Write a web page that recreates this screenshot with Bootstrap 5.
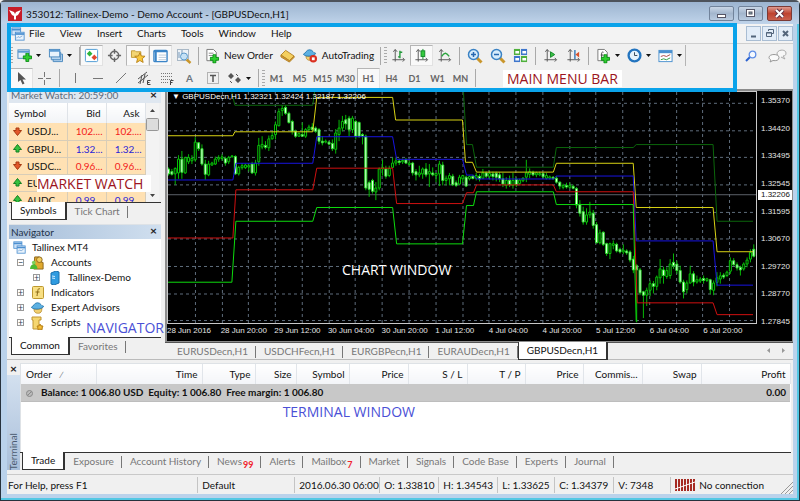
<!DOCTYPE html>
<html lang="en">
<head>
<meta charset="utf-8">
<meta name="viewport" content="width=device-width, initial-scale=1">
<title>353012: Tallinex-Demo - Demo Account</title>
<link href="https://cdn.jsdelivr.net/npm/bootstrap@5.3.0/dist/css/bootstrap.min.css" rel="stylesheet">
<style>
  body { font-family: Lato, "Open Sans", sans-serif; font-size: 10px; line-height: 15px; color: #111; background: #f0f0f0; }
  button { background: none; border: 1px solid transparent; padding: 0; color: inherit; font: inherit; }
  a { color: inherit; text-decoration: none; }
  svg { display: block; flex: none; }
  .app-window { min-height: 100vh; border: 1px solid #27323d; border-top: 2px solid #4c525b; background: #bad2eb; padding: 0 6px 6px; box-shadow: inset -1px -1px 0 1px #53c8e4; border-radius: 5px 5px 0 0; }
  .title-bar { height: 22px; margin: 0 -6px; padding: 1px 7px 0; background: linear-gradient(#9cb4d0, #c0d4ea); line-height: 20px; }
  .win-btn { width: 25px; height: 15px; border: 1px solid #71839b; border-radius: 2px; background: linear-gradient(#c9d6e6, #a3b6cd 50%, #b9cbe0); }
  .win-btn.shut { background: linear-gradient(#dd9a8f, #bf4330 50%, #c9604e); border-color: #7c3a35; }
  .face { background: #f0f0f0; }
  .menu-row { height: 20px; background: #f3f3f3; border-bottom: 1px solid #cfcfcf; }
  .menu-items { gap: 15px; margin-left: 4px; }
  .mdi-btn { width: 15px; height: 15px; border: 1px solid #a9bdd3; background: #e3edf8; margin-left: 1px; }
  .tool-row { height: 23px; padding-left: 3px; }
  .tool-row + .tool-row { height: 22px; }
  .tool { width: 23px; height: 21px; flex: none; display: flex; align-items: center; justify-content: center; }
  .tool.wide { width: 31px; gap: 4px; }
  .tool.label-tool { width: auto; gap: 4px; padding: 0 2px; }
  .tool.on { background: #f9f9f9; border-color: #b5b5b5 #e2e2e2 #e2e2e2 #b5b5b5; }
  .tool.period { font-size: 9px; font-weight: 700; color: #666; }
  .rule { width: 1px; height: 18px; background: #a9a9a9; margin: 0 3px; flex: none; }
  .grip { width: 3px; height: 17px; flex: none; background: repeating-linear-gradient(#aaa 0 1px, #f0f0f0 1px 3px); }
  .bar-end { border-right: 1px solid #b4b4b4; }
  .band { border: 4px solid #0aa3ea; left: 0; right: 56px; top: -1px; bottom: -3px; pointer-events: none; z-index: 5; }
  .note { font: 14px/17px "Open Sans", "Noto Sans", sans-serif; white-space: nowrap; }
  .note.red { color: #9c1420; background: #fff; }
  .note.blue { color: #4a50d6; }
  .watch-note { left: 28px; top: 86px; }
  .nav-note { left: 77px; top: 80px; }
  .chart-note { left: 28%; top: 68%; }
  .terminal-note { margin: 1px 0 0 34%; }
  .side { width: 158px; flex: none; padding: 0 4px 4px 2px; }
  .pane-head { height: 14px; line-height: 14px; color: #23344a; padding: 0 3px 0 2px; background: linear-gradient(90deg, #a6bed9, #d0dfef); }
  .pane-head.pale { background: #dfe7f0; color: #5c6a7a; line-height: 12px; }
  .shut-x { width: 9px; height: 12px; line-height: 10px; font-weight: 700; font-size: 12px; color: #222; }
  .quote-box { height: 99px; }
  .quotes { table-layout: fixed; width: 136px; line-height: 16px; }
  .quotes th { font-weight: 400; height: 20px; background: linear-gradient(#fff, #f2f4f7); border-right: 1px solid #dfe3e8; padding: 0 5px; }
  .quotes td { height: 17px; background: #ffe1b3; border-right: 1px solid #d8cdb8; border-bottom: 1px solid #d8cdb8; padding: 0 3px; white-space: nowrap; }
  .quotes td svg { display: inline-block; margin: -2px 5px 0 1px; }
  .down { color: #f3211c; } .rise { color: #2a25d8; }
  .strip { height: 18px; border-top: 1px solid #333; line-height: 17px; color: #777; }
  .strip button { height: 17px; border: 0; white-space: nowrap; padding: 0 8px; position: relative; }
  .strip button:not(.current):after { content: ""; position: absolute; right: 0; top: 3px; height: 12px; width: 1px; background: #777; }
  .strip .current { background: #fff; color: #111; border: solid #333; border-width: 0 2px 1px 1px; margin: -1px 0 0 2px; height: 18px; }
  .tree { line-height: 15px; padding-top: 1px; }
  .tree ul, ul.tree { list-style: none; padding-left: 0; margin: 0; }
  .tree .node { display: flex; align-items: center; gap: 6px; height: 15px; }
  .twig { width: 7px; height: 7px; border: 1px solid #999; background: #fff; color: #345; font-size: 9px; line-height: 5px; text-align: center; flex: none; }
  .chart-side { min-width: 0; }
  .chart { background: #000; color: #e4e4e4; font: 8px/10px "Liberation Sans", Arial, sans-serif; border: solid #8c8c8c; border-width: 2px 1px 1px 2px; }
  .plot { border: 1px solid #c8c8c8; min-height: 0; }
  .plot svg { position: absolute; inset: 0; width: 100%; height: 100%; }
  .times { display: grid; grid-template-columns: repeat(11, 1fr); height: 17px; padding-top: 2px; white-space: nowrap; }
  .prices { width: 35px; padding: 5px 0 14px 4px; }
  .now { background: #fff; color: #111; left: 1px; right: 0; top: 99px; padding-left: 3px; }
  .doc-tabs { border-top: 1px solid #555; height: 17px; }
  .doc-tabs .current { margin-left: 0; }
  .terminal { padding: 3px 0 4px; border-top: 1px solid #bbb; }
  .ledger { height: 89px; }
  .orders { table-layout: fixed; width: 100%; }
  .orders th { font-weight: 400; text-align: right; height: 20px; padding: 0 4px; white-space: nowrap; background: linear-gradient(#fff, #f3f5f8); border-right: 1px solid #e1e5ea; }
  .orders td { height: 17px; background: #c8c8c8; font-weight: 700; color: #111; white-space: pre; padding: 0 4px; border-bottom: 1px solid #bdbdbd; }
  .orders th:first-child, .orders td:first-child { text-align: left; padding-left: 5px; }
  .spine { width: 13px; background: linear-gradient(#f0f0f0 12px, #d3e0ef 12px, #a9bfda); }
  .spine span { writing-mode: vertical-rl; transform: rotate(180deg); color: #4b5b70; line-height: 13px; }
  .count { color: #f0232c; font-size: 9px; font-weight: 700; position: relative; top: 3px; margin-left: 1px; }
  .status { height: 20px; line-height: 18px; border-top: 1px solid #c9c9c9; white-space: nowrap; padding-left: 1px; }
  .status > span { border-left: 1px solid #c4c4c4; padding-left: 4px; height: 16px; line-height: 16px; flex: none; }
  .status .w-a { width: 97px; } .status .w-b { width: 85px; } .status .w-c { width: 59px; } .status .w-d { width: 57px; }
</style>
</head>
<body>
<svg width="0" height="0" class="position-absolute" aria-hidden="true">
  <defs>
    <symbol id="i-caret" viewBox="0 0 5 3"><path d="M0 0h5L2.500 3z" fill="#111"/></symbol>
    <symbol id="i-windows" viewBox="0 0 16 16"><rect x="1" y="1" width="10" height="8" fill="#cfe3f7" stroke="#4b8fd0"/><path d="M1 3h10" stroke="#4b8fd0" stroke-width="2"/><rect x="5" y="6" width="10" height="9" fill="#e9f3fc" stroke="#4b8fd0"/><path d="M5 8h10" stroke="#4b8fd0" stroke-width="2"/><path d="M6 13l2-2 2 1 3-2" stroke="#7aa6d4" fill="none"/></symbol>
    <symbol id="i-plus" viewBox="0 0 10 10"><path d="M3.500.5h3v3h3v3h-3v3h-3v-3h-3v-3h3z" fill="#2fcf2f" stroke="#0a8c14"/></symbol>
    <symbol id="i-down" viewBox="0 0 9 9"><path d="M3 1h3v2.500h2.500L4.500 8.500.5 3.500H3z" fill="#e2572a" stroke="#a63a12"/></symbol>
    <symbol id="i-up" viewBox="0 0 9 9"><path d="M3 8h3V5.500h2.500L4.500.5.5 5.500H3z" fill="#35c13f" stroke="#138022"/></symbol>
    <symbol id="i-axes" viewBox="0 0 16 16"><path d="M4.500 2v12.500M1.500 12.500H14M2.500 4l2-2.500 2 2.500M12.500 10.500l2 2-2 2" stroke="#555" fill="none"/></symbol>
    <symbol id="i-lens" viewBox="0 0 16 16"><path d="M9.500 9.500l5 5" stroke="#c9962c" stroke-width="3"/><circle cx="6.500" cy="6.500" r="5" fill="#d6ecfb" stroke="#3a82c4" stroke-width="1.500"/></symbol>
    <symbol id="i-hat" viewBox="0 0 16 16"><path d="M4 9c0 4 2 5 5 5s4-2 4-6c-3 2-6 2-9 1z" fill="#f1d070" stroke="#bb9238"/><path d="M1 7c3-1 3-5 7-5s4 4 7 4c0 3-12 5-14 1z" fill="#5cb0e2" stroke="#2878ad"/></symbol>
  </defs>
</svg>

<div class="app-window d-flex flex-column">
  <header class="title-bar d-flex align-items-center">
    <svg width="14" height="14" viewBox="0 0 14 14"><rect width="14" height="14" fill="#c71c28"/><path d="M1 3l5 2 1 2 1-2 5-2-3 5-2 1v3l-1 1-1-1V9L4 8z" fill="#fff"/></svg>
    <span class="ms-1 text-nowrap">353012: Tallinex-Demo - Demo Account - [GBPUSDecn,H1]</span>
    <div class="d-flex ms-auto gap-1">
      <button class="win-btn" aria-label="Minimize"><svg width="23" height="13" viewBox="0 0 23 13"><rect x="7.500" y="7.500" width="8" height="3" fill="#fff" stroke="#556"/></svg></button>
      <button class="win-btn" aria-label="Maximize"><svg width="23" height="13" viewBox="0 0 23 13"><rect x="7.500" y="2.500" width="8" height="7" fill="#fff" stroke="#556"/><rect x="10" y="5" width="3" height="2" fill="#8aa" stroke="#556"/></svg></button>
      <button class="win-btn shut" aria-label="Close"><svg width="23" height="13" viewBox="0 0 23 13"><path d="M8 3l7 7M15 3l-7 7" stroke="#634" stroke-width="4"/><path d="M8 3l7 7M15 3l-7 7" stroke="#fff" stroke-width="2"/></svg></button>
    </div>
  </header>

  <div class="face position-relative">
    <div class="band position-absolute"></div>
    <nav class="menu-row d-flex align-items-center ps-1" aria-label="Main">
      <svg width="14" height="14"><use href="#i-windows"/></svg>
      <div class="menu-items d-flex">
        <a href="#">File</a>
        <a href="#">View</a>
        <a href="#">Insert</a>
        <a href="#">Charts</a>
        <a href="#">Tools</a>
        <a href="#">Window</a>
        <a href="#">Help</a>
      </div>
      <div class="d-flex ms-auto">
        <button class="mdi-btn" aria-label="Minimize chart"><svg width="13" height="13"><path d="M4 9.500h5" stroke="#53657b" stroke-width="2"/></svg></button>
        <button class="mdi-btn" aria-label="Restore chart"><svg width="13" height="13"><path d="M5.500 4V2.500h5v4H9M3.500 5.500h5v4h-5zM3.500 6h5" stroke="#53657b" fill="none"/></svg></button>
        <button class="mdi-btn" aria-label="Close chart"><svg width="13" height="13"><path d="M4 4l5 5M9 4l-5 5" stroke="#53657b" stroke-width="2"/></svg></button>
      </div>
    </nav>

    <div class="tool-row d-flex align-items-center">
      <div class="d-flex align-items-center bar-end">
        <div class="grip"></div>
        <button class="tool wide" aria-label="New chart"><svg width="15" height="15" viewBox="0 0 16 16"><rect x="1" y="2" width="12" height="9" fill="#e4f0fb" stroke="#4a88be"/><path d="M1 4h12" stroke="#5b9ad2" stroke-width="2"/><use href="#i-plus" x="6" y="5" width="10" height="10"/></svg><svg width="5" height="3"><use href="#i-caret"/></svg></button>
        <button class="tool wide" aria-label="Profiles"><svg width="15" height="15" viewBox="0 0 16 16"><path d="M5.500 12v2.500h10v-8H14M3.500 9.500v3h10v-8H12" fill="#b8d5ef" stroke="#4a88be"/><rect x="1.500" y="1.500" width="11" height="8" fill="#e9f3fc" stroke="#4a88be"/><path d="M1 3h12" stroke="#5b9ad2" stroke-width="2"/></svg><svg width="5" height="3"><use href="#i-caret"/></svg></button>
        <div class="rule mx-1 me-0"></div>
        <button class="tool on" aria-label="Market Watch"><svg width="15" height="15" viewBox="0 0 16 16"><rect x="1.500" y="1.500" width="13" height="13" rx="1" fill="#fff" stroke="#4b9ad4"/><path d="M3 6l3-3 3 3-3 3z" fill="#2cb53b"/><path d="M8 10l3-3 3 3-3 3z" fill="#e2482d"/></svg></button>
        <button class="tool" aria-label="Data Window"><svg width="15" height="15" viewBox="0 0 16 16"><circle cx="8" cy="8" r="4.500" fill="none" stroke="#666" stroke-width="1.500"/><path d="M8 1v5M8 10v5M1 8h5M10 8h5" stroke="#666" stroke-width="1.500"/></svg></button>
        <button class="tool on" aria-label="Navigator"><svg width="16" height="15" viewBox="0 0 16 16"><path d="M1 3h4l1 1h5v6H1z" fill="#f3d674" stroke="#c19a34"/><path d="M10 5l1.500 3.500 4 .3-3 2.600 1 4L10 13.300 6.500 15.500l1-4-3-2.700 4-.3z" fill="#f9c93d" stroke="#b98218"/></svg></button>
        <button class="tool on" aria-label="Terminal"><svg width="15" height="14" viewBox="0 0 16 14"><rect x="1" y="1" width="14" height="12" rx="1" fill="#fff" stroke="#3b85c8" stroke-width="1.500"/><path d="M1 2h14M3 2v11" stroke="#3b85c8" stroke-width="2"/><path d="M6 6h8M6 8.500h8M6 11h8" stroke="#b9c9d9"/></svg></button>
        <button class="tool" aria-label="Strategy Tester"><svg width="16" height="16" viewBox="0 0 16 16"><rect x="1.500" y="1.500" width="11" height="11" fill="#eef3f7" stroke="#a9b8c6"/><path d="M3 4v6M6 2v6" stroke="#7699bb"/><path d="M10.500 11.500l4 3.500" stroke="#c9962c" stroke-width="2.500"/><circle cx="8" cy="8.500" r="3.500" fill="#c5e2f6" stroke="#5e9bcb"/></svg></button>
        <div class="rule"></div>
        <button class="tool label-tool"><svg width="15" height="16" viewBox="0 0 16 16"><path d="M2 1h7l3 3v9H2z" fill="#fff" stroke="#777"/><path d="M4 5h5M4 7.500h5" stroke="#888"/><use href="#i-plus" x="5" y="6" width="10" height="10"/></svg>New Order</button>
        <button class="tool" aria-label="MetaEditor"><svg width="15" height="14" viewBox="0 0 16 14"><path d="M1 6l5-5 9 6-5 5z" fill="#f4cf5e" stroke="#b3832a"/><path d="M1 6v2l9 5.500 5-5V7l-5 5z" fill="#d9992c" stroke="#b3832a"/></svg></button>
        <button class="tool label-tool"><svg width="16" height="15" viewBox="0 0 16 16"><use href="#i-hat" width="15" height="15"/><circle cx="11.500" cy="11.500" r="4" fill="#da2f20"/><rect x="10" y="10" width="3" height="3" fill="#fff"/></svg>AutoTrading</button>
        <div class="rule"></div>
        <div class="grip"></div>
        <button class="tool" aria-label="Bar chart"><svg width="15" height="15" viewBox="0 0 16 16"><use href="#i-axes"/><path d="M9.500 3v8M7.500 9.500h2M9.500 4.500h2.500" stroke="#23993a" stroke-width="1.500"/></svg></button>
        <button class="tool on" aria-label="Candlesticks"><svg width="15" height="15" viewBox="0 0 16 16"><use href="#i-axes"/><path d="M9.500 1v11" stroke="#128a28"/><rect x="7.500" y="3" width="4" height="6" fill="#34ca3d" stroke="#128a28"/></svg></button>
        <button class="tool" aria-label="Line chart"><svg width="15" height="15" viewBox="0 0 16 16"><use href="#i-axes"/><path d="M5 9c3-5 5-4 8 0" stroke="#2ba53e" stroke-width="1.500" fill="none"/></svg></button>
        <div class="rule"></div>
        <button class="tool" aria-label="Zoom in"><svg width="16" height="16" viewBox="0 0 16 16"><use href="#i-lens"/><path d="M6.500 4v5M4 6.500h5" stroke="#2668b0" stroke-width="1.500"/></svg></button>
        <button class="tool" aria-label="Zoom out"><svg width="16" height="16" viewBox="0 0 16 16"><use href="#i-lens"/><path d="M4 6.500h5" stroke="#2668b0" stroke-width="1.500"/></svg></button>
        <button class="tool" aria-label="Tile windows"><svg width="15" height="15" viewBox="0 0 16 16"><rect x="1" y="1" width="6.500" height="6.500" fill="#4fb03c"/><rect x="8.500" y="1" width="6.500" height="6.500" fill="#3e76cc"/><rect x="1" y="8.500" width="6.500" height="6.500" fill="#3e76cc"/><rect x="8.500" y="8.500" width="6.500" height="6.500" fill="#4fb03c"/><path d="M2.500 4.500h4M10 4.500h4M2.500 12h4M10 12h4" stroke="#fff" stroke-width="2.500"/></svg></button>
        <div class="rule"></div>
        <button class="tool" aria-label="Auto scroll"><svg width="15" height="15" viewBox="0 0 16 16"><use href="#i-axes"/><path d="M8 4v6l4.500-3z" fill="#39c144" stroke="#15862a"/></svg></button>
        <button class="tool" aria-label="Chart shift"><svg width="15" height="15" viewBox="0 0 16 16"><use href="#i-axes"/><path d="M9.500 2v10" stroke="#3377b7" stroke-width="1.500"/><path d="M10 7l4-3v6z" fill="#db532b"/></svg></button>
        <div class="rule"></div>
        <button class="tool wide" aria-label="Indicators"><svg width="15" height="16" viewBox="0 0 16 16"><path d="M2 1h7l3 3v9H2z" fill="#fff" stroke="#777"/><path d="M6 11V5c0-1 1-1.500 2-1M5 7h3" stroke="#444" fill="none"/><use href="#i-plus" x="5" y="6" width="10" height="10"/></svg><svg width="5" height="3"><use href="#i-caret"/></svg></button>
        <button class="tool wide" aria-label="Periods"><svg width="15" height="15" viewBox="0 0 16 16"><circle cx="8" cy="8" r="6.300" fill="#e6f3fc" stroke="#2374bf" stroke-width="2.500"/><path d="M8 4.500V8h3" stroke="#345" fill="none"/></svg><svg width="5" height="3"><use href="#i-caret"/></svg></button>
        <button class="tool wide" aria-label="Templates"><svg width="15" height="14" viewBox="0 0 16 14"><rect x="1" y="1" width="14" height="12" fill="#fff" stroke="#4a90cf"/><path d="M1 2.500h14" stroke="#4a90cf" stroke-width="3"/><path d="M3 7.500l3-1 3 1 4-2" stroke="#a44" fill="none"/><path d="M3 11l3-1 3 1 4-2" stroke="#2a9a3c" fill="none"/></svg><svg width="5" height="3"><use href="#i-caret"/></svg></button>
      </div>
      <div class="d-flex ms-auto gap-1 me-1">
        <button class="tool" aria-label="Search"><svg width="12" height="12" viewBox="0 0 12 12"><path d="M1 11l4-4" stroke="#2b62cf" stroke-width="2"/><circle cx="7.500" cy="4.500" r="3.300" fill="#f5f9ff" stroke="#5f8ee6" stroke-width="1.300"/></svg></button>
        <button class="tool" aria-label="Chat"><svg width="19" height="14" viewBox="0 0 19 14"><path d="M10 7l-1-2c0-5 9-5 9-1 0 2-1 3-3 3l2 3-4-2" fill="#f7f7f7" stroke="#aaa"/><path d="M1 8.500c0-4 10-4 10 0 0 3-3 3.500-6 3l-3 1.500 1-2c-1-.5-2-1.500-2-2.500z" fill="#fafafa" stroke="#999"/></svg></button>
      </div>
    </div>

    <div class="tool-row d-flex align-items-center">
      <button class="tool on" aria-label="Cursor"><svg width="9" height="13" viewBox="0 0 9 13"><path d="M1 0v10l2.500-2 2 4.500 2-1-2-4H9z" fill="#555"/></svg></button>
      <button class="tool" aria-label="Crosshair"><svg width="13" height="13"><path d="M6.500 0v5M6.500 8v5M0 6.500h5M8 6.500h5" stroke="#777"/></svg></button>
      <div class="rule"></div>
      <button class="tool" aria-label="Vertical line"><svg width="12" height="12"><path d="M6.500 1v10" stroke="#777"/></svg></button>
      <button class="tool" aria-label="Horizontal line"><svg width="12" height="12"><path d="M1 6.500h10" stroke="#777"/></svg></button>
      <button class="tool" aria-label="Trendline"><svg width="12" height="12"><path d="M1 11L11 1" stroke="#777"/></svg></button>
      <button class="tool" aria-label="Equidistant channel"><svg width="14" height="14"><path d="M1 8l9-7M1 12l10-8M3 13l2-9M6 12l2-9" stroke="#555" fill="none"/><path d="M13.500 9.500h-3v4h3M10.500 11.500h2" stroke="#444" fill="none"/></svg></button>
      <button class="tool" aria-label="Fibonacci retracement"><svg width="14" height="14"><path d="M1 2.500h12M1 5.500h12M1 8.500h12M1 11.500h8" stroke="#777" stroke-dasharray="1 1"/><path d="M13.500 9.500h-3V14M10.500 11.500h2" stroke="#444" fill="none"/></svg></button>
      <button class="tool fw-bold text-secondary" aria-label="Text">A</button>
      <button class="tool" aria-label="Text label"><svg width="12" height="12"><path d="M.5.5h11v11H.5z" stroke="#777" stroke-dasharray="1 1" fill="none"/><path d="M3 3.500h6M6 3v7" stroke="#555" stroke-width="1.500"/></svg></button>
      <button class="tool wide" aria-label="Arrows"><svg width="14" height="12"><path d="M0 4l3-3 3 3-3 3zM7 8l3-3 3 3-3 3z" fill="#555"/><path d="M2 9l2 2M8 2l2 2" stroke="#555"/></svg><svg width="5" height="3"><use href="#i-caret"/></svg></button>
      <div class="rule"></div>
      <div class="grip"></div>
      <button class="tool period">M1</button>
      <button class="tool period">M5</button>
      <button class="tool period">M15</button>
      <button class="tool period">M30</button>
      <button class="tool period on">H1</button>
      <button class="tool period">H4</button>
      <button class="tool period">D1</button>
      <button class="tool period">W1</button>
      <button class="tool period">MN</button>
      <div class="rule"></div>
      <span class="note red ms-4 px-1">MAIN MENU BAR</span>
    </div>
  </div>

  <main class="d-flex flex-grow-1 face">
    <aside class="side d-flex flex-column">
      <section class="position-relative">
        <div class="pane-head pale d-flex justify-content-between"><span>Market Watch: 20:59:00</span><button class="shut-x" aria-label="Close Market Watch">×</button></div>
        <div class="quote-box d-flex overflow-hidden">
          <table class="quotes">
            <colgroup><col width="58"><col width="39"><col width="39"></colgroup>
            <thead><tr><th>Symbol</th><th class="text-end">Bid</th><th class="text-end">Ask</th></tr></thead>
            <tbody>
              <tr><td><svg width="9" height="9"><use href="#i-down"/></svg>USDJ...</td><td class="down text-end">102....</td><td class="down text-end">102....</td></tr>
              <tr><td><svg width="9" height="9"><use href="#i-up"/></svg>GBPU...</td><td class="rise text-end">1.32...</td><td class="rise text-end">1.32...</td></tr>
              <tr><td><svg width="9" height="9"><use href="#i-down"/></svg>USDC...</td><td class="down text-end">0.96...</td><td class="down text-end">0.96...</td></tr>
              <tr><td><svg width="9" height="9"><use href="#i-up"/></svg>EU</td><td></td><td></td></tr>
              <tr><td><svg width="9" height="9"><use href="#i-up"/></svg>AUDC...</td><td class="rise text-end">0.99...</td><td class="rise text-end">0.99...</td></tr>
            </tbody>
          </table>
          <svg width="13" height="99"><rect width="13" height="99" fill="#f3f3f3"/><path d="M4 9l2.500-3L9 9zM4 91h5l-2.500 3z" fill="#444"/><rect x=".5" y="15.500" width="12" height="12" rx="1" fill="#dcdcdc" stroke="#979797"/></svg>
        </div>
        <span class="note red watch-note position-absolute pe-2">MARKET WATCH</span>
        <div class="strip d-flex"><button class="current">Symbols</button><button>Tick Chart</button></div>
      </section>
      <section class="flex-grow-1 d-flex flex-column mt-1 border-top">
        <div class="pane-head d-flex justify-content-between"><span>Navigator</span><button class="shut-x" aria-label="Close Navigator">×</button></div>
        <div class="bg-white flex-grow-1 position-relative">
          <ul class="tree">
            <li><div class="node ps-1"><svg width="13" height="13"><use href="#i-windows"/></svg>Tallinex MT4</div>
              <ul class="ps-2">
                <li><div class="node"><span class="twig">−</span><svg width="15" height="14" viewBox="0 0 16 15"><path d="M5 1h5l1 5 3 1v7H4z" fill="#e0a92e" stroke="#8c651a"/><circle cx="10" cy="4" r="3" fill="#f4cf62" stroke="#8c651a"/><circle cx="4" cy="7" r="2" fill="#7fd05a"/><path d="M0 14c0-7 8-7 8 0z" fill="#4dba32"/></svg>Accounts</div>
                  <ul class="ps-3"><li><div class="node"><span class="twig">+</span><svg width="16" height="14" viewBox="0 0 16 14"><path d="M5 2l5-2 3 1v11l-5 2-3-1z" fill="#2f9be0" stroke="#1b70ad"/><path d="M6 5l3 .5M6 7l3 .5" stroke="#cfeaff"/></svg>Tallinex-Demo</div></li></ul></li>
                <li><div class="node"><span class="twig">+</span><svg width="15" height="13" viewBox="0 0 15 13"><rect x="2.500" y=".5" width="11" height="12" rx="1" fill="#f8df83" stroke="#bd982f"/><path d="M10 3c-2-1-2 0-3 7M5.500 6h4" stroke="#876510" fill="none"/></svg>Indicators</div></li>
                <li><div class="node"><span class="twig">+</span><svg width="15" height="14"><use href="#i-hat"/></svg>Expert Advisors</div></li>
                <li><div class="node"><span class="twig">+</span><svg width="15" height="14" viewBox="0 0 15 14"><path d="M2 1h9v3H9v6h3v3H3V4H2z" fill="#f5d670" stroke="#c09531"/><path d="M10 8l1 2 2 0-1 2 0 2-2-1-2 1 0-2-1-2 2 0z" fill="#f4bd35" stroke="#b98218"/></svg>Scripts</div></li>
              </ul></li>
          </ul>
          <span class="note blue nav-note position-absolute">NAVIGATOR</span>
        </div>
        <div class="strip d-flex"><button class="current">Common</button><button>Favorites</button></div>
      </section>
    </aside>

    <div class="chart-side flex-grow-1 d-flex flex-column">
      <div class="chart flex-grow-1 d-flex position-relative">
        <div class="flex-grow-1 d-flex flex-column">
          <div class="plot position-relative flex-grow-1">
            <svg viewBox="167 90 589 235" preserveAspectRatio="none" id="plot" aria-label="GBPUSDecn H1 price chart"></svg>
            <span class="position-relative ps-1 text-white">▼ GBPUSDecn,H1 1.32321 1.32424 1.32187 1.32206</span>
          </div>
          <div class="times"><span>28 Jun 2016</span><span>28 Jun 20:00</span><span>29 Jun 12:00</span><span>30 Jun 04:00</span><span>30 Jun 20:00</span><span>1 Jul 12:00</span><span>4 Jul 04:00</span><span>4 Jul 20:00</span><span>5 Jul 12:00</span><span>6 Jul 04:00</span><span>6 Jul 20:00</span></div>
        </div>
        <div class="prices d-flex flex-column justify-content-between position-relative">
          <span>1.35370</span><span>1.34420</span><span>1.33495</span><span>1.32545</span><span>1.31595</span><span>1.30670</span><span>1.29720</span><span>1.28770</span><span>1.27845</span>
          <span class="now position-absolute">1.32206</span>
        </div>
        <span class="note chart-note text-white position-absolute">CHART WINDOW</span>
      </div>
      <div class="strip doc-tabs d-flex ps-1"><button>EURUSDecn,H1</button><button>USDCHFecn,H1</button><button>EURGBPecn,H1</button><button>EURAUDecn,H1</button><button class="current">GBPUSDecn,H1</button>
        <svg class="ms-auto me-2" width="20" height="15"><path d="M5 5v5L2 7.500zM17 5v5l3-2.500z" fill="#999"/></svg></div>
    </div>
  </main>

  <section class="terminal face d-flex">
    <div class="spine d-flex flex-column justify-content-between align-items-center"><button class="shut-x" aria-label="Close Terminal">×</button><span>Terminal</span></div>
    <div class="flex-grow-1 pe-1">
      <div class="ledger bg-white border-top border-start">
        <table class="orders">
          <colgroup><col width="75"><col width="106"><col width="53"><col width="41"><col width="53"><col width="59"><col width="59"><col width="58"><col width="58"><col width="59"><col width="59"><col width="89"></colgroup>
          <thead><tr><th>Order &nbsp; <small class="text-secondary">∕</small></th><th>Time</th><th>Type</th><th>Size</th><th>Symbol</th><th>Price</th><th>S / L</th><th>T / P</th><th>Price</th><th>Commis...</th><th>Swap</th><th>Profit</th></tr></thead>
          <tbody><tr><td colspan="11"><svg class="d-inline-block me-2" width="7" height="7"><circle cx="3.500" cy="3.500" r="3" fill="#bbb" stroke="#888"/><path d="M1.500 5.500l4-4" stroke="#888"/></svg>Balance: 1 006.80 USD  Equity: 1 006.80  Free margin: 1 006.80</td><td class="text-end">0.00</td></tr></tbody>
        </table>
        <div class="note blue terminal-note">TERMINAL WINDOW</div>
      </div>
      <div class="strip d-flex"><button class="current">Trade</button><button>Exposure</button><button>Account History</button><button>News<span class="count">99</span></button><button>Alerts</button><button>Mailbox<span class="count">7</span></button><button>Market</button><button>Signals</button><button>Code Base</button><button>Experts</button><button>Journal</button></div>
    </div>
  </section>

  <footer class="status face d-flex align-items-center">
    <div class="flex-grow-1">For Help, press F1</div>
    <span class="w-a">Default</span><span class="w-b">2016.06.30 06:00</span><span class="w-c">O: 1.33810</span><span class="w-c">H: 1.34543</span><span class="w-d">L: 1.33625</span><span class="w-c">C: 1.34379</span><span class="w-d">V: 7348</span>
    <span class="d-flex align-items-center"><svg class="me-1" width="20" height="12"><path d="M1 0v12M4 0v12M7 0v12M10 0v12M13 0v12M16 0v12M19 0v12" stroke="#a62a22" stroke-width="2"/><path d="M0 10L20 3" stroke="#fff"/></svg>No connection</span>
    <svg class="ms-3 mt-auto" width="13" height="13"><path d="M1 13L13 1M5 13l8-8M9 13l4-4" stroke="#999"/></svg>
  </footer>
</div>

<script src="https://cdn.jsdelivr.net/npm/bootstrap@5.3.0/dist/js/bootstrap.bundle.min.js"></script>
<script>
  // Each candle: high, low, body top, body bottom, falling (1) or rising (0); heights in thirds of a unit below 85.
  const candles = [
    [245,270,250,265,1],[250,270,258,266,1],[245,298,248,265,0],[208,280,220,262,0],[195,280,220,260,1],[212,265,215,262,0],[205,235,215,228,0],[208,235,218,225,0],[153,228,168,222,0],[168,195,170,188,1],
    [175,240,188,235,1],[222,283,235,266,1],[225,272,235,268,0],[228,240,232,238,0],[212,238,220,235,0],[208,228,215,220,0],[205,225,213,218,0],[212,240,218,232,1],[210,235,215,228,0],[208,215,210,213,0],
    [208,268,212,265,1],[240,270,245,265,0],[232,252,240,246,0],[235,250,238,246,0],[232,258,240,244,0],[228,265,235,262,1],[222,270,232,262,0],[155,240,178,228,0],[150,190,175,183,0],[165,190,178,184,1],
    [148,195,158,185,0],[135,160,148,158,0],[105,160,115,145,0],[65,120,75,118,0],[55,88,65,72,0],[55,85,62,80,1],[75,112,80,108,1],[100,145,105,135,1],[130,155,135,150,1],[138,152,142,150,0],
    [108,152,145,150,1],[125,155,130,150,0],[115,135,122,130,0],[110,135,122,130,1],[120,140,125,135,1],[125,175,130,165,1],[150,178,165,170,1],[160,172,165,168,0],[165,178,168,174,1],[160,195,172,188,1],
    [128,203,140,190,0],[100,165,125,145,0],[88,135,105,125,0],[85,130,100,112,1],[88,150,95,130,1],[88,140,95,130,0],[100,160,105,150,1],[105,155,108,150,1],[140,175,145,150,1],[145,315,150,308,1],
    [285,335,292,312,1],[280,325,285,318,1],[290,345,308,320,0],[245,315,250,308,0],[222,270,245,250,0],[240,280,250,272,1],[240,275,248,270,0],[215,245,232,245,0],[215,240,225,232,0],[218,238,226,230,1],
    [218,235,224,228,0],[216,235,222,232,1],[225,240,232,236,0],[228,270,232,262,1],[250,285,258,268,1],[240,275,262,268,0],[245,280,250,265,0],[232,275,250,268,1],[235,305,258,265,0],[245,272,262,268,1],
    [262,290,264,270,0],[225,302,235,265,0],[228,300,238,285,1],[270,300,278,285,0],[262,300,270,280,0],[265,302,272,298,1],[285,305,292,300,1],[268,300,275,296,0],[268,292,270,280,0],[270,305,275,302,1],
    [270,285,273,280,0],[268,282,272,279,1],[262,285,270,278,0],[265,288,272,280,1],[250,280,262,278,0],[258,278,262,272,1],[255,282,264,272,0],[258,285,265,273,1],[258,288,263,275,1],[260,290,268,280,1],
    [262,305,280,296,1],[275,310,285,300,0],[270,305,284,298,1],[262,310,285,300,0],[275,305,282,298,1],[280,300,284,294,0],[275,290,278,286,0],[222,290,262,275,0],[248,278,258,266,0],[255,272,260,268,1],
    [258,275,262,268,0],[258,272,264,268,0],[262,280,264,274,1],[262,282,270,278,0],[270,282,274,278,0],[272,282,275,280,1],[272,295,278,290,1],[288,312,290,302,1],[295,312,300,306,0],[292,310,300,305,1],
    [292,310,300,306,0],[298,312,303,309,1],[305,370,310,360,1],[345,395,358,385,1],[365,420,380,412,1],[370,420,390,412,0],[350,400,382,390,0],[375,432,385,422,1],[412,478,420,475,1],[435,480,445,475,0],
    [440,485,443,480,1],[475,515,478,508,1],[475,525,478,508,0],[468,495,478,483,0],[475,505,480,500,1],[490,508,495,503,1],[480,510,498,503,0],[495,512,500,506,1],[498,535,503,528,1],[515,568,525,558,1],
    [540,718,545,558,1],[552,635,558,628,1],[622,705,625,635,1],[612,668,620,635,0],[590,638,600,620,0],[592,630,600,608,1],[575,620,580,608,0],[525,600,555,582,0],[548,600,558,575,1],[550,585,560,578,0],
    [525,585,540,575,0],[508,555,535,545,1],[530,570,540,560,1],[545,600,560,595,1],[588,645,595,625,1],[590,630,598,618,0],[545,600,570,598,0],[562,608,570,595,1],[575,600,588,595,0],[580,598,586,592,0],
    [575,600,584,590,1],[582,595,585,590,0],[585,632,588,618,1],[590,635,598,620,0],[565,608,582,596,0],[565,600,576,586,0],[568,586,574,580,1],[560,580,565,575,0],[520,570,530,562,0],[522,545,530,542,1],
    [535,560,542,552,1],[545,575,550,558,1],[535,560,540,555,0],[520,550,528,540,0],[495,535,505,525,0],[480,520,495,516,1]
  ];
  const levels = [
    ["#0b660b", "231,90 234,103 312,103 314,88 462,88 463,90 466,143 472,143 476,166 553,166 556,146 633,146 636,143 713,143 717,221 753,221"],
    ["#d8d214", "167,134 232,134 234,130 312,130 316,95 392,95 395,118 462,118 465,161 472,161 476,171 553,171 556,162 633,162 636,207 713,207 717,252 753,252"],
    ["#1814e0", "167,179 232,179 235,162 312,162 316,135 392,135 396,158 462,158 466,174 473,174 476,178 553,178 556,175 633,175 636,241 713,241 717,286 753,286"],
    ["#d01010", "167,238 232,238 235,189 312,189 316,167 392,167 396,203 462,203 466,192 473,192 476,184 553,184 556,191 633,191 637,304 713,304 717,316 753,316"],
    ["#0edc0e", "167,283 231,283 235,221 312,221 316,207 392,207 396,244 462,244 466,205 473,205 476,191 553,191 556,204 633,204 636,323"]
  ];
  let out = "";
  const stroke = 'vector-effect="non-scaling-stroke" fill="none"';
  for (let k = 1; k < 22; k++) { const x = Math.round(167 + 589 * k / 22) + .5; out += `<path d="M${x} 90V325" stroke="#5f6d7c" stroke-dasharray="3 3" ${stroke}/>`; }
  for (let k = 0; k < 9; k++) { const y = Math.round(101 + 27.67 * k) + .5; out += `<path d="M167 ${y}H756" stroke="#5f6d7c" stroke-dasharray="3 3" ${stroke}/>`; }
  out += `<path d="M167 194.5H756" stroke="#5c6068" ${stroke}/>`;
  let wicks = "", falling = "", rising = "";
  candles.forEach(([hi, lo, top, bottom, fall], i) => {
    const x = 167.5 + 3.35 * i, y = v => (85 + v / 3).toFixed(1);
    wicks += `M${x} ${y(hi)}V${y(top)}M${x} ${y(bottom)}V${y(lo)}`;
    const box = `M${x - 1} ${y(top)}H${x + 1}V${y(bottom)}H${x - 1}Z`;
    if (fall) falling += box; else rising += box;
  });
  out += `<path d="${wicks}" stroke="#06b806" ${stroke}/><path d="${rising}" stroke="#08c808" vector-effect="non-scaling-stroke" fill="#000"/><path d="${falling}" stroke="#2be02b" vector-effect="non-scaling-stroke" fill="#e8ffe8"/>`;
  for (const [color, pts] of levels) out += `<polyline points="${pts}" transform="translate(0 .5)" stroke="${color}" ${stroke}/>`;
  document.getElementById("plot").innerHTML = out;
</script>
</body>
</html>
